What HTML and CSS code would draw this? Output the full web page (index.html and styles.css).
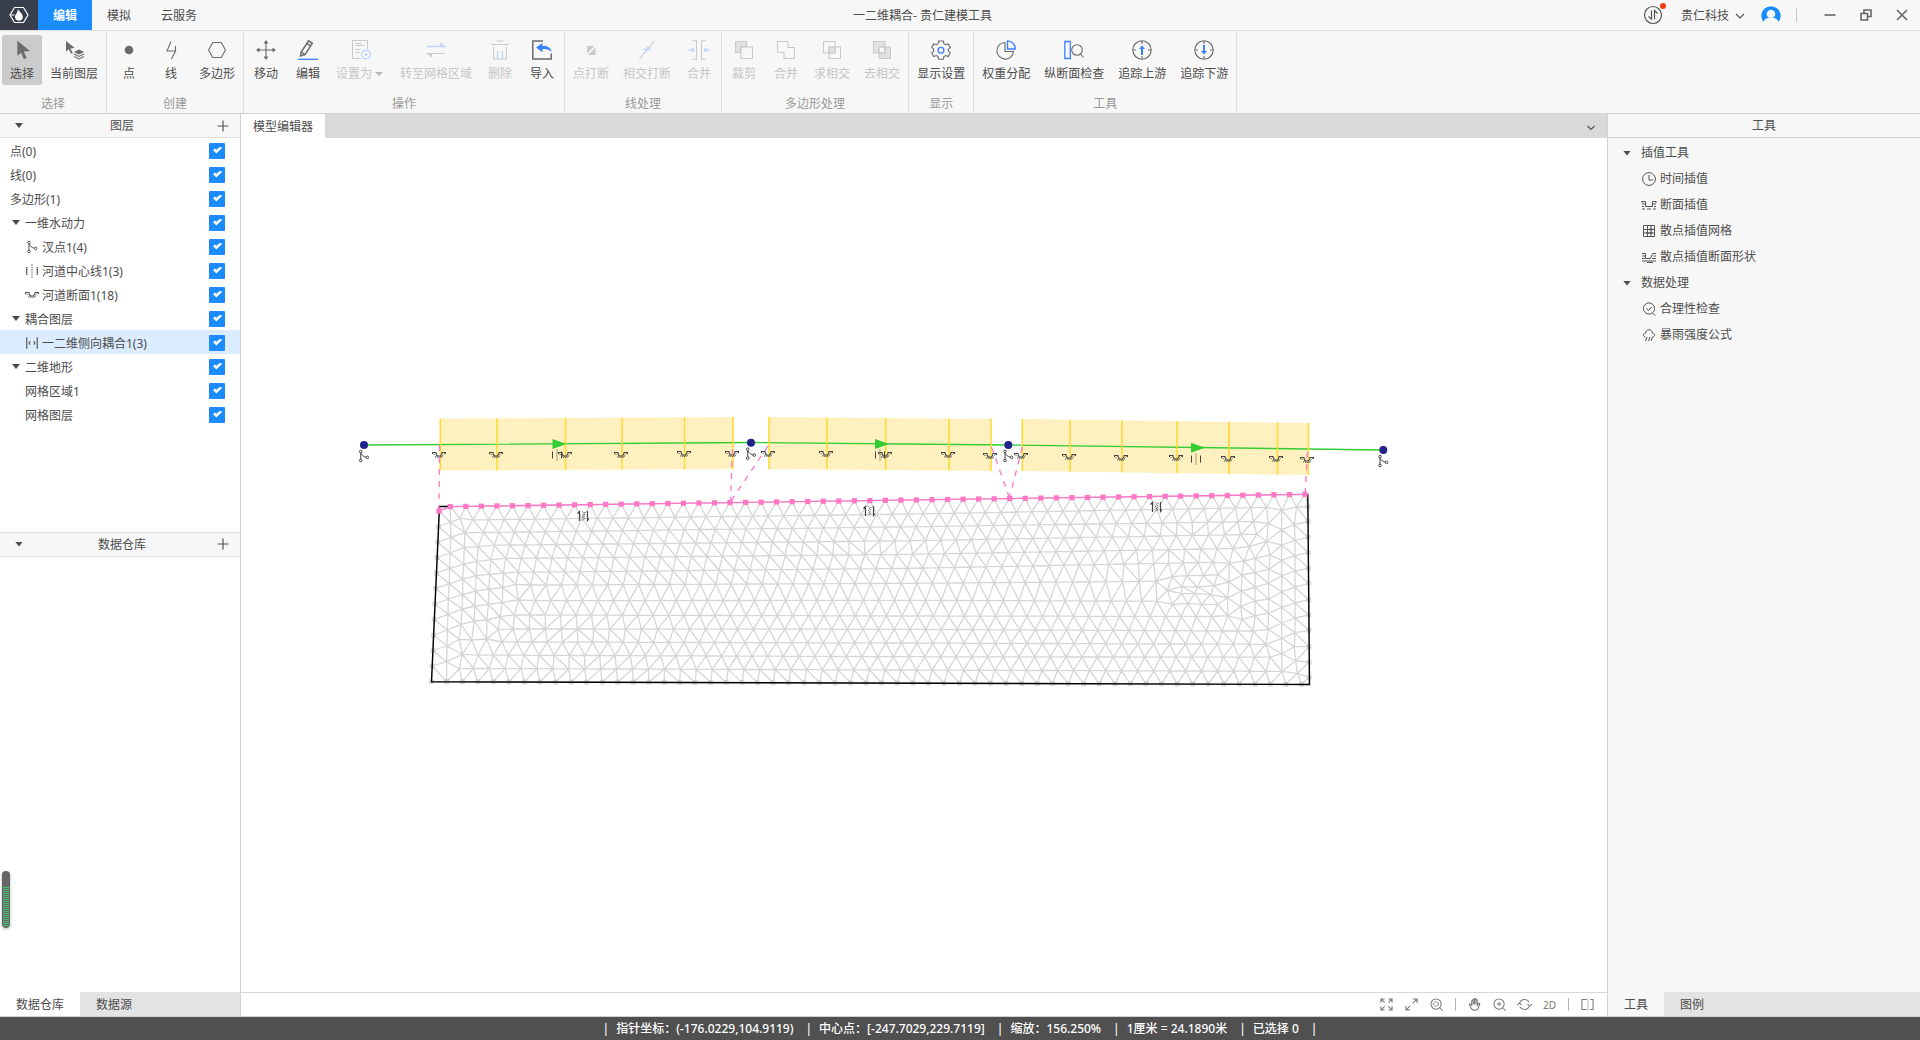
FILE: index.html
```html
<!DOCTYPE html>
<html lang="zh-CN">
<head>
<meta charset="utf-8">
<title>一二维耦合- 贵仁建模工具</title>
<link rel="stylesheet" href="styles.css">
</head>
<body>
<svg class="defs" aria-hidden="true">
  <symbol id="section" viewBox="0 0 14 8"><path d="M.5 3V1.500h3.500v1l1.500 2.500h3L10 2.500v-1h3.500V3" stroke-width="1.100"/><path d="M2.500 3L1.500 4M4.500 4.500L3.500 6.500M6.500 5.500L5.500 7M8.500 5.500L7.500 7M10.500 4.500L9.500 6.500M12.500 2.500l-1 1"/></symbol>
  <symbol id="junction" viewBox="0 0 12 14"><circle cx="3" cy="2.500" r="1.300"/><circle cx="3" cy="11.500" r="1.300"/><circle cx="9.600" cy="8.400" r="1.300"/><path d="M3 3.800v6.400M3.400 4.200c.8 2.200 2.600 3.600 5 4"/></symbol>
  <symbol id="centerline" viewBox="0 0 12 12"><path d="M1.500 2.500v7M10.500 2.500v7"/><path d="M6 .5v11" stroke-dasharray="1 1"/></symbol>
  <symbol id="coupling" viewBox="0 0 12 12"><path d="M1.500 1v10M10.500 1v10M4.500 4.500L3.500 6l1 1.500M7.500 4.500l1 1.500-1 1.500"/></symbol>
  <symbol id="exchange" viewBox="0 0 12 12"><path d="M.5 3.500l2-2V11M10.500 1v9.500l1.500-2" stroke-width="1.200"/><path d="M5.500 1.500l1 2-1 2.500 1 2.500-1 2.500M8 2L7 6l1 4" stroke-dasharray="1 1"/></symbol>
</svg>

<div class="app">
  <header class="titlebar">
    <div class="logo">
      <svg width="20" height="20" viewBox="0 0 20 20"><path d="M5.500 2.500h9L19 10l-4.500 7.500h-9L1 10z" fill="none" stroke="#fff" stroke-width="1.200"/><path d="M9 3.500c.5 2 1.200 2.500 2.200 3.500 1.500 1.600 3 3.600 2.600 5.800-.4 2-2.200 3.200-4.200 3-2.200-.3-3.800-2-3.600-4.300.2-1.600 1-2.200 1.700-3.300.8-1.200 1.100-3 1.300-4.700z" fill="#fff"/><path d="M1.500 10h4" stroke="#fff"/></svg>
    </div>
    <nav class="menu">
      <button class="menu-item active">编辑</button>
      <button class="menu-item">模拟</button>
      <button class="menu-item">云服务</button>
    </nav>
    <h1 class="title">一二维耦合- 贵仁建模工具</h1>
    <div class="account">
      <button class="bare notice" aria-label="传输列表">
        <svg width="20" height="20" viewBox="0 0 20 20" class="line"><circle cx="10" cy="10" r="8.500"/><path d="M5.500 11.500L8.500 14V5.500M11.500 14.500V5.500l3 3"/></svg>
        <i class="dot"></i>
      </button>
      <button class="bare user">贵仁科技
        <svg width="10" height="6" viewBox="0 0 10 6" class="line"><path d="M1 1l4 4 4-4"/></svg>
      </button>
      <button class="bare" aria-label="用户">
        <svg width="20" height="20" viewBox="0 0 20 20"><path d="M2.500 17a9.700 9.700 0 1 1 15 0c-.6-2-2-3.200-4.200-3.900h-6.600c-2.200.7-3.600 1.900-4.200 3.900z" fill="#1a8cff"/><circle cx="10" cy="9" r="4.300" fill="#f7f7f7"/></svg>
      </button>
      <span class="divider"></span>
      <div class="window-controls">
        <button class="bare" aria-label="最小化"><svg width="12" height="12" viewBox="0 0 12 12" class="line heavy"><path d="M.5 6h11"/></svg></button>
        <button class="bare" aria-label="还原"><svg width="12" height="12" viewBox="0 0 12 12" class="line heavy"><path d="M1 4.500h6.500V11H1zM4 4V1h7v6.500H8"/></svg></button>
        <button class="bare" aria-label="关闭"><svg width="12" height="12" viewBox="0 0 12 12" class="line heavy"><path d="M1 1l10 10M11 1L1 11"/></svg></button>
      </div>
    </div>
  </header>

  <div class="ribbon">
    <section class="group">
      <div class="tools">
        <button class="tool pressed"><svg viewBox="0 0 20 20"><path class="solid" d="M5.300.7v15l3.700-3 3 6.500 2.600-1.200-2.900-6.400 6.300-.6z"/></svg><span>选择</span></button>
        <button class="tool"><svg viewBox="0 0 20 20"><path class="solid" d="M2 1v10.500l2.700-2.300 2.500 4.600 1.600-.9-2.400-4.500 4.400-.4z"/><path class="solid" d="M15 9.500l5 2.500-5 2.500-5-2.500z"/><path d="M10 14l5 2.500 5-2.500M10 16.500l5 2.500 5-2.500"/></svg><span>当前图层</span></button>
      </div>
      <h2>选择</h2>
    </section>
    <section class="group">
      <div class="tools">
        <button class="tool"><svg viewBox="0 0 20 20"><circle class="solid" cx="10" cy="10" r="4.300"/></svg><span>点</span></button>
        <button class="tool"><svg viewBox="0 0 20 20"><path d="M10 1.500L6 11h8.500L10.500 19M14.500 10.800V6"/></svg><span>线</span></button>
        <button class="tool"><svg viewBox="0 0 20 20"><path d="M5.800 2.500h8.400L18.500 10l-4.300 7.500H5.800L1.500 10z"/></svg><span>多边形</span></button>
      </div>
      <h2>创建</h2>
    </section>
    <section class="group">
      <div class="tools">
        <button class="tool"><svg viewBox="0 0 20 20"><path d="M10 2v16M2 10h16"/><path class="solid" d="M10 0l2.500 3.500h-5zM10 20l2.500-3.500h-5zM0 10l3.500-2.500v5zM20 10l-3.500-2.500v5z"/></svg><span>移动</span></button>
        <button class="tool"><svg viewBox="0 0 20 20"><path d="M2.500 16l.7-4L10.500.8l3.800 2.500L7 14.600zM8.800 3.300l3.700 2.500M3.200 12l3.600 2.500" stroke-width="1.500"/><path class="blue" d="M0 19.300h20"/></svg><span>编辑</span></button>
        <button class="tool" disabled><svg viewBox="0 0 20 20"><path d="M10 18.500H1.500v-18h15V9M4.500 5.500h9M4.500 9.500h5M4.500 12.500h4M4.500 3.500h6"/><path class="blue" d="M12.600 10.500h4.800l2.300 4-2.300 4.200h-4.800l-2.300-4.200z"/><circle class="blue-fill" cx="15" cy="14.600" r="1.400"/></svg><span class="with-caret">设置为<i class="caret"></i></span></button>
        <button class="tool" disabled><svg viewBox="0 0 20 20"><path class="blue" d="M1 6.500h17.500l-4-3v3"/><path d="M19 13.500H1.500l4 3v-3"/></svg><span>转至网格区域</span></button>
        <button class="tool" disabled><svg viewBox="0 0 20 20"><path d="M1 4.500h18M6.500 1h7M3.500 7v12h13V7"/><path class="blue" d="M7.500 11v8M12.500 11v8"/></svg><span>删除</span></button>
        <button class="tool"><svg viewBox="0 0 20 20"><path d="M11 1H.8v18h18.400v-5.500" stroke-width="1.500"/><path class="blue-fill" d="M4 7.500L10.500 3v3c5.500-.5 8.500 2 9 6-2.500-2.500-5-3-9-3v3.200z"/></svg><span>导入</span></button>
      </div>
      <h2>操作</h2>
    </section>
    <section class="group">
      <div class="tools">
        <button class="tool" disabled><svg viewBox="0 0 20 20"><path class="solid" d="M6 6h7.500L6 13.500zM14.500 7.500V15H7z"/></svg><span>点打断</span></button>
        <button class="tool" disabled><svg viewBox="0 0 20 20"><path d="M2.500 19L17.500 1"/><path class="blue" d="M6.500 9.500h7M8.500 12.500l2.500-6"/></svg><span>相交打断</span></button>
        <button class="tool" disabled><svg viewBox="0 0 20 20"><path d="M3 .8h4.500v18.400H3M17 .8h-4.500v18.400H17"/><path class="blue" d="M-.5 10H5M20.500 10H15M3 8l2 2-2 2M17 8l-2 2 2 2"/></svg><span>合并</span></button>
      </div>
      <h2>线处理</h2>
    </section>
    <section class="group">
      <div class="tools">
        <button class="tool" disabled><svg viewBox="0 0 20 20"><path class="tint" d="M1.500 1.500h11v5h-6v6h-5z"/><path d="M7 7h11.500v11.500H7z"/></svg><span>裁剪</span></button>
        <button class="tool" disabled><svg viewBox="0 0 20 20"><path d="M1.500 1.500h10.500v6h6.500v11H8v-6.300H1.500z"/></svg><span>合并</span></button>
        <button class="tool" disabled><svg viewBox="0 0 20 20"><path d="M1.500 1.500h11.500V13H1.500zM7 7h11.500v11.500H7z"/><path class="tint" d="M7 7h6v6H7z"/></svg><span>求相交</span></button>
        <button class="tool" disabled><svg viewBox="0 0 20 20"><path class="tint" d="M1.500 1.500h11.500V7H7v6H1.500zM13 7h5.500v11.500H7V13h6z"/><path d="M7 7h6v6H7z"/></svg><span>去相交</span></button>
      </div>
      <h2>多边形处理</h2>
    </section>
    <section class="group">
      <div class="tools">
        <button class="tool"><svg viewBox="0 0 20 20"><path d="M7.700 1h4.600l.6 2.700 1.800 1 2.600-.8 2 3.500-2 1.800v1.900l2 1.800-2 3.600-2.600-.9-1.800 1-.6 2.700H7.700l-.6-2.700-1.800-1-2.600.9-2-3.600 2-1.800V9.200l-2-1.800 2-3.500 2.600.8 1.800-1z"/><circle class="blue" cx="10" cy="10.200" r="2.900"/></svg><span>显示设置</span></button>
      </div>
      <h2>显示</h2>
    </section>
    <section class="group">
      <div class="tools">
        <button class="tool"><svg viewBox="0 0 20 20"><path d="M9 2.500a8.300 8.300 0 1 0 8.500 9H9z"/><path class="blue" d="M11.500.8a8 8 0 0 1 7.800 8.200h-7.800z"/></svg><span>权重分配</span></button>
        <button class="tool"><svg viewBox="0 0 20 20"><path class="blue" d="M.8 1.500h5.500v17H.8z"/><circle cx="13" cy="10" r="5.300"/><path d="M16.500 14l3 3.500"/></svg><span>纵断面检查</span></button>
        <button class="tool"><svg viewBox="0 0 20 20"><circle cx="10" cy="10" r="9.200"/><path d="M10 1v3M10 16v3M1 10h3M16 10h3"/><path class="blue-fill" d="M10 5.500l3 3.500h-2v6H9V9H7z"/></svg><span>追踪上游</span></button>
        <button class="tool"><svg viewBox="0 0 20 20"><circle cx="10" cy="10" r="9.200"/><path d="M10 1v3M10 16v3M1 10h3M16 10h3"/><path class="blue-fill" d="M10 14.500l3-3.500h-2V5H9v6H7z"/></svg><span>追踪下游</span></button>
      </div>
      <h2>工具</h2>
    </section>
  </div>

  <main class="workspace">
    <aside class="side left">
      <section class="panel">
        <header class="panel-head">
          <button class="bare toggle" aria-label="折叠图层"><i class="caret"></i></button>
          <h2>图层</h2>
          <button class="bare add" aria-label="添加图层"><svg width="12" height="12" viewBox="0 0 12 12" class="line"><path d="M6 .5v11M.5 6h11"/></svg></button>
        </header>
        <ul class="layers">
          <li><label class="layer"><span class="name">点(0)</span><input type="checkbox" checked></label></li>
          <li><label class="layer"><span class="name">线(0)</span><input type="checkbox" checked></label></li>
          <li><label class="layer"><span class="name">多边形(1)</span><input type="checkbox" checked></label></li>
          <li><label class="layer parent"><i class="caret"></i><span class="name">一维水动力</span><input type="checkbox" checked></label></li>
          <li><label class="layer child"><svg class="glyph"><use href="#junction"/></svg><span class="name">汊点1(4)</span><input type="checkbox" checked></label></li>
          <li><label class="layer child"><svg class="glyph"><use href="#centerline"/></svg><span class="name">河道中心线1(3)</span><input type="checkbox" checked></label></li>
          <li><label class="layer child"><svg class="glyph"><use href="#section"/></svg><span class="name">河道断面1(18)</span><input type="checkbox" checked></label></li>
          <li><label class="layer parent"><i class="caret"></i><span class="name">耦合图层</span><input type="checkbox" checked></label></li>
          <li><label class="layer child selected"><svg class="glyph"><use href="#coupling"/></svg><span class="name">一二维侧向耦合1(3)</span><input type="checkbox" checked></label></li>
          <li><label class="layer parent"><i class="caret"></i><span class="name">二维地形</span><input type="checkbox" checked></label></li>
          <li><label class="layer child"><span class="name">网格区域1</span><input type="checkbox" checked></label></li>
          <li><label class="layer child"><span class="name">网格图层</span><input type="checkbox" checked></label></li>
        </ul>
      </section>
      <section class="panel store">
        <header class="panel-head">
          <button class="bare toggle" aria-label="折叠数据仓库"><i class="caret"></i></button>
          <h2>数据仓库</h2>
          <button class="bare add" aria-label="添加数据"><svg width="12" height="12" viewBox="0 0 12 12" class="line"><path d="M6 .5v11M.5 6h11"/></svg></button>
        </header>
      </section>
      <div class="tabs">
        <button class="tab current">数据仓库</button>
        <button class="tab">数据源</button>
      </div>
      <div class="meter"></div>
    </aside>

    <section class="editor">
      <div class="editor-tabs">
        <button class="editor-tab">模型编辑器</button>
        <button class="bare more" aria-label="更多标签"><svg width="8" height="6" viewBox="0 0 8 6" class="line"><path d="M.5 1L4 4.500 7.500 1"/></svg></button>
      </div>
      <div class="viewport">
        <svg class="map" id="map" viewBox="241 138 1366 854"></svg>
      </div>
      <div class="view-tools">
        <button class="bare" aria-label="全屏"><svg viewBox="0 0 14 14"><path d="M1 5V1h4M9 1h4v4M13 9v4H9M5 13H1V9M1 1l4 4M13 1L9 5M13 13L9 9M1 13l4-4"/></svg></button>
        <button class="bare" aria-label="缩放至全图"><svg viewBox="0 0 14 14"><path d="M8.500 1H13v4.500M13 1L8.500 5.500M1 8.500V13h4.500M1 13l4.500-4.500"/></svg></button>
        <button class="bare" aria-label="缩放至选择"><svg viewBox="0 0 14 14"><circle cx="6.500" cy="6.500" r="5.500"/><path d="M10.500 10.500L13.500 13.500"/><circle cx="6.500" cy="6.500" r="2.500" stroke-dasharray="2 1"/></svg></button>
        <span class="bar"></span>
        <button class="bare" aria-label="平移"><svg viewBox="0 0 14 14"><path d="M4 8V3.200c0-1 1.500-1 1.500 0V7 1.800c0-1 1.500-1 1.500 0V7 1.300c0-1 1.500-1 1.500 0V7 2.500c0-1 1.500-1 1.500 0V8l1.300-2c.7-.8 1.700-.2 1.300.7L11 11c-.6 1.500-1.500 2.300-3.500 2.300-2.500 0-3.500-.8-4.500-2.800L1.500 7.200c-.3-1 .8-1.300 1.300-.6z"/></svg></button>
        <button class="bare" aria-label="放大"><svg viewBox="0 0 14 14"><circle cx="6.500" cy="6.500" r="5.500"/><path d="M10.500 10.500L13.500 13.500M4 6.500h5M6.500 4v5"/></svg></button>
        <button class="bare" aria-label="旋转"><svg class="wide" viewBox="0 0 16 14"><path d="M2.500 6A5.700 5.700 0 0 1 13 4.500M13.500 8A5.700 5.700 0 0 1 3 9.500M0 7.500l2.500-2 2.300 2M16 6.500l-2.500 2-2.300-2"/></svg></button>
        <button class="bare mode">2D</button>
        <span class="bar"></span>
        <button class="bare" aria-label="分屏"><svg viewBox="0 0 14 14"><path d="M6 1.500H1v11h5M10 1.500h3v11h-3"/><path d="M7.500 .5v13" class="faint"/></svg></button>
      </div>
    </section>

    <aside class="side right">
      <header class="panel-head"><h2>工具</h2></header>
      <div class="toolbox">
        <div class="entry head"><i class="caret"></i>插值工具</div>
        <a class="entry" href="#time"><svg viewBox="0 0 14 14"><circle cx="7" cy="7" r="6.400"/><path d="M7 3v5h4"/></svg>时间插值</a>
        <a class="entry" href="#section"><svg viewBox="0 0 14 14"><path d="M0 3.500h3.500v5h7v-5H14M0 6h3M0 8.500h2M0 11h3M5 11h4M11 11h3M11 6h3M12 8.500h2M0 3v2M14 3v2"/></svg>断面插值</a>
        <a class="entry" href="#grid"><svg viewBox="0 0 14 14"><path d="M1.500 1.500h11v11h-11zM5.500 1.500v11M9 1.500v11M1.500 5.500h11M1.500 9h11"/><path d="M4.300 9h2.400M7.800 5.500h2.400M7.800 9h2.400" stroke-width="2"/></svg>散点插值网格</a>
        <a class="entry" href="#shape"><svg viewBox="0 0 14 14"><path d="M0 3.500h3.500v5h5l2-5H14M0 6h3M0 8.500h3M10 8.500h4M0 11h14M11.500 6H14M5 12.500h6"/></svg>散点插值断面形状</a>
        <div class="entry head"><i class="caret"></i>数据处理</div>
        <a class="entry" href="#check"><svg viewBox="0 0 14 14"><circle cx="7" cy="6.500" r="5.600"/><path d="M4.500 6.500L6.500 8.500l3-3.500M10.500 11l3 2.500"/></svg>合理性检查</a>
        <a class="entry" href="#storm"><svg viewBox="0 0 14 14"><path d="M3.500 9C.5 8.500.8 5.300 3.500 5.200 4 .6 10 .6 10.500 5.200c2.800.1 3 3.300 0 3.800M5 9l-1.500 4M8 9l-1.500 4M10.500 9L9 13"/></svg>暴雨强度公式</a>
      </div>
      <div class="tabs">
        <button class="tab current">工具</button>
        <button class="tab">图例</button>
      </div>
    </aside>
  </main>

  <footer class="status">
    <span class="item">指针坐标：(-176.0229,104.9119)</span>
    <span class="item">中心点：[-247.7029,229.7119]</span>
    <span class="item">缩放：156.250%</span>
    <span class="item">1厘米 = 24.1890米</span>
    <span class="item">已选择 0</span>
  </footer>
</div>
<script src="map.js"></script>
</body>
</html>
```

FILE: styles.css
```css
* { box-sizing: border-box; }

body {
  margin: 0;
  background: #f7f7f7;
  color: #4d4d4d;
  font: 12px/18px "Noto Sans", "Noto Sans CJK SC", sans-serif;
}

h1, h2 { margin: 0; font-size: 12px; font-weight: 400; }
ul { margin: 0; padding: 0; list-style: none; }
button { font: inherit; color: inherit; border: 0; margin: 0; }
svg { display: block; flex: none; overflow: visible; }

.defs { position: absolute; width: 0; height: 0; }
.bare { background: none; padding: 0; display: flex; align-items: center; justify-content: center; }
.line { fill: none; stroke: #555; stroke-width: 1.2; }
.line.heavy { stroke-width: 1.6; stroke: #666; }
.caret {
  flex: none;
  width: 8px;
  height: 5px;
  background: currentColor;
  clip-path: polygon(0 0, 100% 0, 50% 100%);
}

.app { height: 100vh; display: flex; flex-direction: column; overflow: hidden; }

/* Title bar */
.titlebar { flex: none; height: 31px; display: flex; border-bottom: 1px solid #e0e0e0; }
.logo { width: 38px; background: #393e4d; display: flex; align-items: center; justify-content: center; }
.menu { display: flex; }
.menu-item { padding: 2px 15px 0; background: none; }
.menu-item.active { background: #1a8cff; color: #fff; font-weight: 700; }
.title { flex: 1; text-align: center; line-height: 32px; }
.account { display: flex; align-items: center; padding: 0 12px 0 10px; }
.notice { position: relative; }
.dot { position: absolute; right: -3px; top: -2px; width: 6px; height: 6px; border-radius: 50%; background: #f03c14; }
.user { gap: 6px; margin: 0 16px 0 18px; padding-top: 2px; }
.divider { width: 1px; height: 14px; background: #c8c8c8; margin: 0 27px 0 15px; }
.window-controls { display: flex; gap: 24px; }

/* Ribbon */
.ribbon { flex: none; height: 83px; display: flex; border-bottom: 1px solid #d2d2d2; }
.group { display: flex; flex-direction: column; padding: 4px 2px 0; border-right: 1px solid #e0e0e0; }
.group h2 { color: #999; text-align: center; line-height: 18px; margin-top: 10px; }
.tools { display: flex; gap: 2px; }
.tool {
  min-width: 40px;
  height: 50px;
  padding: 5px 6px 0;
  display: flex;
  flex-direction: column;
  align-items: center;
  gap: 5px;
  background: none;
  border-radius: 2px;
  white-space: nowrap;
}
.tool svg { width: 20px; height: 20px; fill: none; stroke: #6b6b6b; stroke-width: 1.1; }
.tool .solid { fill: #6b6b6b; stroke: none; }
.tool .blue { stroke: #3d7eff; stroke-width: 1.3; }
.tool .blue-fill { fill: #3583ff; stroke: none; }
.tool.pressed { background: #cbcbcb; }
.tool:disabled { color: #c6c6c6; }
.tool:disabled svg { stroke: #cacaca; }
.tool:disabled .solid { fill: #cacaca; }
.tool:disabled .tint { fill: #e2e2e2; }
.tool:disabled .blue { stroke: #bfd4ff; }
.tool:disabled .blue-fill { fill: #bfd4ff; }
.with-caret { display: flex; align-items: center; gap: 3px; padding-right: 3px; }
.with-caret .caret { height: 4px; background: #b8b8b8; }

/* Workspace */
.workspace { flex: 1; min-height: 0; display: flex; border-bottom: 1px solid #d2d2d2; }
.side { flex: none; display: flex; flex-direction: column; position: relative; }
.left { width: 241px; background: #fff; border-right: 1px solid #d2d2d2; }
.right { width: 313px; border-left: 1px solid #d2d2d2; }
.panel { flex: 418 1 0; display: flex; flex-direction: column; }
.panel.store { flex: 460 1 0; border-top: 1px solid #e0e0e0; }
.panel-head {
  flex: none;
  height: 24px;
  display: flex;
  align-items: center;
  background: #f7f7f7;
  border-bottom: 1px solid #e0e0e0;
}
.panel-head h2 { flex: 1; text-align: center; line-height: 20px; }
.left .panel-head h2 { padding-top: 1px; }
.right .panel-head { border-color: #d2d2d2; }
.toggle { width: 38px; height: 20px; }
.add { width: 34px; height: 20px; }
.layer { height: 24px; padding: 1px 15px 0 10px; display: flex; align-items: center; }
.layer.parent { padding-left: 12px; gap: 5px; }
.layer.child { padding-left: 25px; gap: 3px; }
.layer.selected { background: #dbecff; }
.name { flex: 1; line-height: 18px; padding-top: 3px; }
.glyph { width: 14px; height: 14px; fill: none; stroke: #555; stroke-width: 1; }
.layer input {
  appearance: none;
  width: 16px;
  height: 16px;
  margin: 0;
  border-radius: 1px;
  background: #1a8cff;
}
.layer input::before {
  content: "";
  display: block;
  width: 9px;
  height: 7px;
  margin: 4px;
  background: #fff;
  clip-path: polygon(0 50%, 20% 28%, 38% 48%, 82% 0, 100% 20%, 38% 100%);
}

.tabs { flex: none; height: 24px; display: flex; background: #e3e3e3; margin-top: auto; }
.tab { padding: 1px 16px 0; background: none; }
.left .tab.current { background: #fff; }
.right .tab.current { background: #f7f7f7; }

.meter {
  position: absolute;
  left: 2px;
  bottom: 88px;
  width: 8px;
  height: 57px;
  border: 1px solid #666;
  border-top-width: 16px;
  border-radius: 4px;
  background: repeating-linear-gradient(#3fc870 0 1px, #666 1px 2px);
  box-shadow: 0 1px 3px rgba(0, 0, 0, .3);
}

/* Editor */
.editor { flex: 1; min-width: 0; display: flex; flex-direction: column; background: #fff; }
.editor-tabs { flex: none; height: 24px; display: flex; justify-content: space-between; background: #d9d9d9; }
.editor-tab { background: #fff; padding: 2px 12px 0; }
.more { width: 32px; padding-top: 3px; }
.viewport { flex: 1; min-height: 0; }
.map { width: 100%; height: 100%; }
.view-tools {
  flex: none;
  height: 24px;
  padding-right: 7px;
  display: flex;
  align-items: center;
  justify-content: flex-end;
  border-top: 1px solid #d9d9d9;
}
.view-tools .bare { width: 25px; height: 23px; }
.view-tools svg { width: 13px; height: 13px; fill: none; stroke: #777; stroke-width: 1.1; }
.view-tools .wide { width: 15px; }
.view-tools .faint { stroke: #bbb; }
.view-tools .mode { font-size: 10px; color: #777; }
.bar { width: 1px; height: 13px; margin: 0 6px; background: #b5b5b5; }

.mesh { fill: none; stroke: #d6d6d6; stroke-width: 1.3; }
.mesh-node { fill: #bbb; opacity: .5; }
.outline { fill: none; stroke: #000; stroke-width: 1.4; }
.corridor { fill: #fff1bf; }
.cut { stroke: #ffd92e; stroke-width: 1.5; }
.river { fill: none; stroke: #3c3; stroke-width: 1.3; }
.flow { fill: #3c3; }
.node { fill: #22228c; }
.link { fill: none; stroke: #ff78c8; stroke-width: 1.3; }
.link.dashed { stroke-dasharray: 6 6; }
.link-node { fill: #ff78c8; }
.mark { fill: none; stroke: #444; stroke-width: 1; }

/* Toolbox */
.toolbox { padding-top: 2px; }
.entry { height: 26px; padding-left: 34px; display: flex; align-items: center; gap: 4px; color: inherit; text-decoration: none; }
.entry.head { padding-left: 15px; gap: 10px; }
.entry svg { width: 14px; height: 14px; fill: none; stroke: #555; stroke-width: 1; }

/* Status bar */
.status {
  flex: none;
  height: 23px;
  display: flex;
  align-items: center;
  justify-content: center;
  background: #505050;
  color: #fff;
  font-weight: 500;
  white-space: nowrap;
}
.item::before { content: "|"; margin-right: 7px; }
.item { padding-right: 12px; }
.item:last-child { padding-right: 0; }
.item:last-child::after { content: "|"; margin-left: 12px; }
```

FILE: map.js
```js
const svg = document.getElementById('map');
const NS = 'http://www.w3.org/2000/svg';

function add(tag, cls, attrs) {
  const el = document.createElementNS(NS, tag);
  el.setAttribute('class', cls);
  for (const k in attrs) el.setAttribute(k, attrs[k]);
  svg.appendChild(el);
}
const line = (cls, x1, y1, x2, y2) => add('line', cls, { x1, y1, x2, y2 });
function mark(id, x, y, w, h) {
  add('use', 'mark', { href: '#' + id, x: x - w / 2, y: y - h / 2, width: w, height: h });
}
function interpolate(xs, ys, x) {
  let i = 0;
  while (i < xs.length - 2 && x > xs[i + 1]) i++;
  return ys[i] + (ys[i + 1] - ys[i]) * (x - xs[i]) / (xs[i + 1] - xs[i]);
}

/* Mesh vertices */
const STEP = 15.54;
const north = [], south = [], west = [], east = [], inner = [];
for (let i = 0; i <= 55; i++) {
  north.push([450.3 + i * STEP, 506.6 - i * 12.3 / 55]);
  south.push([446.7 + i * STEP, 681.7 + i * 2.6 / 55]);
}
for (let i = 0; i <= 11; i++) west.push([439 - i * 7.5 / 11, 511 + i * 170.5 / 11]);
[506.7, 521.7, 537.3, 552.7, 568.3, 583.3, 599.7, 615, 630.3, 646.7, 662, 677.3]
  .forEach((y, i) => east.push([1308 + i * 0.12, y]));

/* One entry per row: x anchors, then y at x = 540, 907, 1107 */
const rows = [
  [[473, 752.5, 1047.3, 1266.7], [519, 514, 510.3]],
  [[483.5, 746, 1055, 1253.3], [531.7, 526.7, 523.7]],
  [[494.3, 742, 1048, 1256.7], [544.7, 540.7, 537]],
  [[505.7, 753.3, 1056, 1233], [558, 554.3, 550.7]],
  [[518.3, 750, 1049, 1213.3], [572, 568.3, 564.3]],
  [[530.7, 746.7, 1056, 1156], [585, 583.3, 581.7]],
  [[535, 754.7, 1050, 1156.7], [600.7, 600.3, 601]],
  [[514.3, 746, 1058, 1211.7], [615, 616, 616.3]],
  [[513.3, 753.5, 1051, 1253.3], [629, 629.3, 630.3]],
  [[501.7, 745, 1058, 1265.7], [642, 643, 643.7]],
  [[478, 752, 1050.5, 1270], [655.3, 656.7, 657]],
  [[473.3, 744, 1057.5, 1282], [668.7, 670, 670.7]]
];
rows.forEach(([a, ys]) => {
  for (let s = 0; s < 3; s++) {
    const n = Math.round((a[s + 1] - a[s]) / STEP);
    for (let k = s ? 1 : 0; k <= n; k++) {
      const x = a[s] + (a[s + 1] - a[s]) * k / n;
      inner.push([x, interpolate([540, 907, 1107], ys, x)]);
    }
  }
});

/* Columns that follow the two short sides, in thirds of a unit */
const westCols = [331,367,333,412,330,459,329,505,328,551,325,597,324,643,322,690,321,738,320,785,
  360,355,375,398,373,442,371,492,368,538,368,584,366,627,363,673,358,718,367,763,358,806,
  415,440,411,485,408,527,407,573,404,618,403,663,395,720,
  452,479,449,523,447,567,445,613,441,660,440,717,490,519,488,563,487,607,480,650,475,688,527,553,536,600];
const eastCols = [770,321,763,374,765,421,765,467,765,513,765,562,765,609,765,654,765,698,763,740,767,783,772,820,
  725,331,725,389,725,435,725,481,725,527,725,575,725,622,725,669,725,715,725,761,725,809,
  685,370,680,424,690,465,687,508,685,550,687,597,685,640,685,688,
  628,440,612,483,606,525,604,573,602,620,606,658,645,475,645,517,645,562,645,603,645,647,
  568,490,567,546,563,594,563,647,397,530,440,527,490,527,533,524,
  382,571,425,560,472,561,522,557,425,581,465,580,512,583,397,613,443,610,485,613,533,613];
for (let i = 0; i < westCols.length; i += 2) inner.push([340 + westCols[i] / 3, 400 + westCols[i + 1] / 3]);
for (let i = 0; i < eastCols.length; i += 2) inner.push([1040 + eastCols[i] / 3, 400 + eastCols[i + 1] / 3]);

/* Bowyer–Watson triangulation */
function triangulate(pts) {
  const n = pts.length;
  const p = pts.concat([[-9000, -9000], [11000, -9000], [900, 12000]]);
  function tri(a, b, c) {
    const [ax, ay] = p[a], bx = p[b][0] - ax, by = p[b][1] - ay, cx = p[c][0] - ax, cy = p[c][1] - ay;
    const d = 2 * (bx * cy - by * cx), b2 = bx * bx + by * by, c2 = cx * cx + cy * cy;
    const ux = (cy * b2 - by * c2) / d, uy = (bx * c2 - cx * b2) / d;
    return { v: [a, b, c], x: ax + ux, y: ay + uy, r: ux * ux + uy * uy };
  }
  let tris = [tri(n, n + 1, n + 2)];
  for (let i = 0; i < n; i++) {
    const edges = new Map(), keep = [];
    for (const t of tris) {
      const dx = p[i][0] - t.x, dy = p[i][1] - t.y;
      if (dx * dx + dy * dy >= t.r) { keep.push(t); continue; }
      for (let k = 0; k < 3; k++) {
        const a = t.v[k], b = t.v[(k + 1) % 3], key = Math.min(a, b) + '_' + Math.max(a, b);
        if (edges.has(key)) edges.set(key, null); else edges.set(key, [a, b]);
      }
    }
    for (const e of edges.values()) if (e) keep.push(tri(e[0], e[1], i));
    tris = keep;
  }
  return tris.filter(t => Math.max(...t.v) < n);
}
const pts = [];
for (const q of [...north, ...south, ...west, ...east, [1309.5, 684.5], ...inner]) {
  if (!pts.some(o => Math.hypot(o[0] - q[0], o[1] - q[1]) < 5)) pts.push(q);
}
const seen = new Set();
let d = '';
for (const t of triangulate(pts)) {
  for (let k = 0; k < 3; k++) {
    const a = Math.min(t.v[k], t.v[(k + 1) % 3]), b = Math.max(t.v[k], t.v[(k + 1) % 3]);
    const key = a + '_' + b;
    if (seen.has(key) || Math.hypot(pts[a][0] - pts[b][0], pts[a][1] - pts[b][1]) > 32) continue;
    seen.add(key);
    d += `M${pts[a][0].toFixed(1)} ${pts[a][1].toFixed(1)}L${pts[b][0].toFixed(1)} ${pts[b][1].toFixed(1)}`;
  }
}
add('path', 'mesh', { d });
for (const [x, y] of [...south, ...west, ...east]) {
  add('rect', 'mesh-node', { x: x - 2.5, y: y - 2.5, width: 5, height: 5, rx: 1 });
}
add('path', 'outline', { d: 'M450 506.5H439.5L431.5 681.7L1309.5 684.5L1307.8 494' });

/* River corridors with their cross sections */
const corridors = [
  { xs: [440.3, 497, 565.5, 622, 684.5, 733], top: [418.6, 417] },
  { xs: [769, 827, 885.7, 949, 991], top: [417, 419] },
  { xs: [1022.3, 1070, 1122, 1177, 1229, 1277.5, 1308.3], top: [419, 423] }
];
for (const { xs, top: [t0, t1] } of corridors) {
  const end = xs[xs.length - 1];
  add('path', 'corridor', { d: `M${xs[0]} ${t0}L${end} ${t1}V${t1 + 52}L${xs[0]} ${t0 + 52}Z` });
}
add('path', 'river', { d: 'M364 445L751 442.5L1008.3 445L1383.3 450' });
for (const { xs, top: [t0, t1] } of corridors) {
  const end = xs[xs.length - 1];
  for (const x of xs) {
    const y = t0 + (t1 - t0) * (x - xs[0]) / (end - xs[0]);
    line('cut', x, y, x, y + 52);
  }
}
[[552.5, 444], [875, 444], [1191, 447.7]].forEach(([x, y]) => add('path', 'flow', { d: `M${x} ${y - 5}l14 5l-14 5z` }));
[[364, 445], [751, 442.7], [1008.3, 445], [1383.3, 450]].forEach(([cx, cy]) => {
  add('circle', 'node', { cx, cy, r: 4 });
  mark('junction', cx - 0.3, cy + 11, 12, 14);
});
[[439, 455], [496, 455], [565, 455], [621, 455], [684, 454], [732, 454], [768, 454], [826, 454], [885, 455],
 [948, 455], [990, 456], [1021, 456], [1069, 457], [1121, 458], [1176, 458], [1228, 459], [1276, 459], [1307, 460]]
  .forEach(([x, y]) => mark('section', x, y, 14, 8));
[[557, 455], [880, 455], [1196, 459]].forEach(([x, y]) => mark('centerline', x, y, 12, 12));
[[583, 516], [869, 511], [1156, 507]].forEach(([x, y]) => mark('exchange', x, y, 12, 12));

/* Lateral coupling */
[[439.5, 445, 439, 509], [732.5, 449, 730.5, 501], [768, 446, 731, 501], [991.5, 447, 1009.5, 498],
 [1022.3, 447, 1009.5, 498], [1307.5, 452, 1305, 494]].forEach(c => line('link dashed', ...c));
add('path', 'link', { d: 'M439 511L450.3 506.6L1305 494.3' });
for (const [x, y] of [[439, 511], ...north]) {
  add('rect', 'link-node', { x: x - 2.6, y: y - 2.6, width: 5.2, height: 5.2 });
}
```
